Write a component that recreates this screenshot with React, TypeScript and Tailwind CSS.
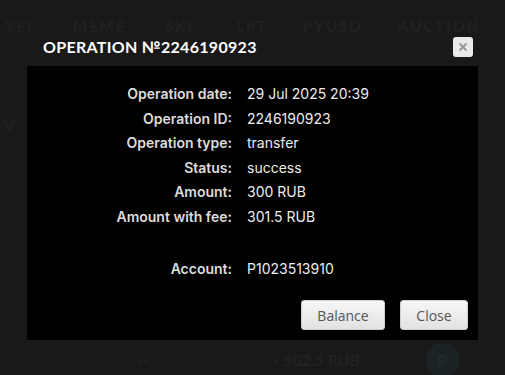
import { X } from "lucide-react";

type Row = { label: string; value: string };

const ROWS: Row[] = [
  { label: "Operation date:", value: "29 Jul 2025 20:39" },
  { label: "Operation ID:", value: "2246190923" },
  { label: "Operation type:", value: "transfer" },
  { label: "Status:", value: "success" },
  { label: "Amount:", value: "300 RUB" },
  { label: "Amount with fee:", value: "301.5 RUB" },
];

const TABS = [
  { name: "YFI", cls: "w-[68px]" },
  { name: "MEME", cls: "w-[92px]" },
  { name: "SKI", cls: "w-[71px]" },
  { name: "LPT", cls: "w-[67px]" },
  { name: "PYUSD", cls: "w-[95px]" },
  { name: "AUCTION", cls: "w-[90px]" },
];

export default function App() {
  return (
    <div className="relative h-[375px] w-[505px] overflow-hidden bg-[#191919] font-['Lato',sans-serif]">
      {/* page behind the modal */}
      <div className="flex pl-[5px] pt-[15px] text-[15px] font-bold tracking-[2px] text-[#212121]">
        {TABS.map((t) => (
          <div key={t.name} className={t.cls}>
            {t.name}
          </div>
        ))}
      </div>
      <div className="mt-[75px] pl-[3px] text-[18px] font-bold text-[#212121]">V</div>
      <div className="mt-[203px] flex items-center text-[16px] font-bold text-[#222]">
        <div className="w-[137px]" />
        <div className="w-[136px]">--</div>
        <div className="w-[152px]">- 502.5 RUB</div>
        <div className="flex h-[34px] w-[34px] items-center justify-center rounded-full bg-[#1b2326] text-[#212b30]">
          P
        </div>
      </div>

      {/* modal */}
      <div className="absolute inset-0 flex flex-col px-[27px] pt-[37px]">
        <div className="flex h-[20px] items-center justify-between pl-[16px] pr-[5px]">
          <div className="text-[16px] font-bold leading-[20px] tracking-[0.3px] text-white">OPERATION №2246190923</div>
          <button className="flex h-[20px] w-[20px] items-center justify-center rounded-[3px] bg-[#e9e9e9]">
            <X size={12} strokeWidth={4} className="text-[#9a9a9a]" />
          </button>
        </div>
        <div className="mt-[9px] flex h-[274px] flex-col bg-black pt-[17px] font-['Inter',sans-serif] text-[14px]">
          <div className="grid grid-cols-[205px_1fr] gap-x-[15px] gap-y-[5.6px]">
            {ROWS.map((r) => (
              <div key={r.label} className="contents">
                <div className="h-[19px] text-right font-semibold text-[#dcdcdc]">{r.label}</div>
                <div className="h-[19px] text-[#ececec]">{r.value}</div>
              </div>
            ))}
            <div className="mt-[27px] h-[19px] text-right font-semibold text-[#dcdcdc]">Account:</div>
            <div className="mt-[27px] h-[19px] text-[#ececec]">P1023513910</div>
          </div>
          <div className="mt-auto flex justify-end gap-[15px] pb-[10px] pr-[10px]">
            <button className="h-[30px] w-[84px] rounded-[3px] border border-[#cfcfcf] bg-gradient-to-b from-[#f7f7f7] to-[#e2e2e2] font-['Open_Sans',sans-serif] text-[14px] text-[#555]">
              Balance
            </button>
            <button className="h-[30px] w-[68px] rounded-[3px] border border-[#cfcfcf] bg-gradient-to-b from-[#f7f7f7] to-[#e2e2e2] font-['Open_Sans',sans-serif] text-[14px] text-[#555]">
              Close
            </button>
          </div>
        </div>
      </div>
    </div>
  );
}
